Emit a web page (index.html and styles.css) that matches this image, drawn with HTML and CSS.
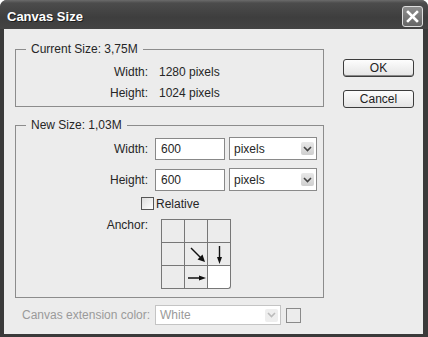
FILE: index.html
```html
<!DOCTYPE html>
<html lang="en">
<head>
    <meta charset="UTF-8">
    <title>Canvas Size</title>
    <link rel="stylesheet" href="styles.css">
</head>
<body>

    <div class="window">
        <!-- Title bar -->
        <div class="titlebar">
            <span class="title">Canvas Size</span>
            <div class="close">
                <svg width="13" height="13" viewBox="0 0 13 13">
                    <path d="M2 2 L11 11 M11 2 L2 11" stroke="#fff" stroke-width="2.6" stroke-linecap="square"/>
                </svg>
            </div>
        </div>

        <div class="client">
            <div class="main">
                <!-- Current size -->
                <fieldset class="group current">
                    <legend>Current Size: 3,75M</legend>
                    <div class="row">
                        <span class="label">Width:</span>
                        <span class="value">1280 pixels</span>
                    </div>
                    <div class="row">
                        <span class="label">Height:</span>
                        <span class="value">1024 pixels</span>
                    </div>
                </fieldset>

                <!-- New size -->
                <fieldset class="group new">
                    <legend>New Size: 1,03M</legend>
                    <div class="field-row">
                        <span class="label">Width:</span>
                        <div class="input">600</div>
                        <div class="select">pixels<span class="arrow"><svg width="9" height="6" viewBox="0 0 9 6"><path d="M1 1 L4.5 4.5 L8 1" fill="none" stroke="#444" stroke-width="1.6"/></svg></span></div>
                    </div>
                    <div class="field-row">
                        <span class="label">Height:</span>
                        <div class="input">600</div>
                        <div class="select">pixels<span class="arrow"><svg width="9" height="6" viewBox="0 0 9 6"><path d="M1 1 L4.5 4.5 L8 1" fill="none" stroke="#444" stroke-width="1.6"/></svg></span></div>
                    </div>
                    <div class="check-row">
                        <span class="checkbox"></span>
                        <span>Relative</span>
                    </div>
                    <div class="anchor-row">
                        <span class="label">Anchor:</span>
                        <div class="anchor">
                            <div class="cell"></div>
                            <div class="cell"></div>
                            <div class="cell"></div>
                            <div class="cell"></div>
                            <div class="cell">
                                <svg width="22" height="22" viewBox="0 0 22 22">
                                    <path d="M6 5 L16 15" stroke="#111" stroke-width="1.4"/>
                                    <polygon points="20,19 17.5,11.5 12.5,16.5" fill="#111"/>
                                </svg>
                            </div>
                            <div class="cell">
                                <svg width="22" height="22" viewBox="0 0 22 22">
                                    <path d="M11.5 3 L11.5 15" stroke="#111" stroke-width="1.4"/>
                                    <polygon points="11.5,21 9,14 14,14" fill="#111"/>
                                </svg>
                            </div>
                            <div class="cell"></div>
                            <div class="cell">
                                <svg width="22" height="22" viewBox="0 0 22 22">
                                    <path d="M3 12 L15 12" stroke="#111" stroke-width="1.4"/>
                                    <polygon points="21,12 14,9.5 14,14.5" fill="#111"/>
                                </svg>
                            </div>
                            <div class="cell current-cell"></div>
                        </div>
                    </div>
                </fieldset>

                <!-- Canvas extension color -->
                <div class="ext-row">
                    <span class="ext-label">Canvas extension color:</span>
                    <div class="select disabled">White<span class="arrow"><svg width="9" height="6" viewBox="0 0 9 6"><path d="M1 1 L4.5 4.5 L8 1" fill="none" stroke="#bbb" stroke-width="1.6"/></svg></span></div>
                    <span class="swatch"></span>
                </div>
            </div>

            <!-- Buttons -->
            <div class="buttons">
                <div class="button default">OK</div>
                <div class="button">Cancel</div>
            </div>
        </div>
    </div>

</body>
</html>
```

FILE: styles.css
```css
/* Window chrome */
body {
    margin: 0;
    background-color: #fff;
    font-family: "Liberation Sans", Arial, sans-serif;
    font-size: 12px;
    color: #262626;
}

.window {
    width: 428px;
    height: 337px;
    background-color: #3a3a3a;
    border-radius: 7px 7px 0 0;
    display: flex;
    flex-direction: column;
    overflow: hidden;
}

.titlebar {
    height: 29px;
    flex: none;
    box-sizing: border-box;
    display: flex;
    align-items: center;
    justify-content: space-between;
    padding: 4px 5px 0 7px;
    background: linear-gradient(#6b6b6b 0, #4c4c4c 3px, #3e3e3e 60%, #444 100%);
}

.title {
    color: #fff;
    font-weight: bold;
    font-size: 13px;
    text-shadow: 1px 1px 0 #1c1c1c;
}

.close {
    width: 19px;
    height: 19px;
    border: 1px solid #dedede;
    border-radius: 3px;
    background: linear-gradient(#8e8e8e, #666);
    display: flex;
    align-items: center;
    justify-content: center;
}

/* Client area */
.client {
    flex: 1;
    margin: 0 5px 3px 4px;
    background-color: #ececec;
    display: flex;
    padding: 13px 9px 0 11px;
}

.main {
    width: 309px;
    flex: none;
}

.group {
    margin: 0;
    padding: 5px 0 3px 0;
    border: 1px solid #8c8c8c;
    min-width: 0;
}

.group legend {
    margin-left: 10px;
    padding: 0 5px;
    line-height: 14px;
}

.group.new {
    margin-top: 11px;
    padding-bottom: 8px;
}

.row {
    display: grid;
    grid-template-columns: 132px auto;
    column-gap: 11px;
    height: 21px;
    align-items: center;
}

.label {
    text-align: right;
}

/* New size fields */
.field-row {
    display: flex;
    align-items: center;
    height: 23px;
}

.field-row + .field-row {
    margin-top: 8px;
}

.field-row .label {
    width: 132px;
    margin-right: 7px;
}

.input {
    width: 70px;
    height: 22px;
    box-sizing: border-box;
    border: 1px solid #888;
    background-color: #fff;
    padding-left: 5px;
    line-height: 20px;
}

.select {
    width: 88px;
    height: 23px;
    box-sizing: border-box;
    margin-left: 4px;
    border: 1px solid #8a8a8a;
    background-color: #fff;
    padding-left: 4px;
    display: flex;
    align-items: center;
    justify-content: space-between;
}

.select .arrow {
    width: 13px;
    height: 13px;
    margin-right: 2px;
    border-radius: 2px;
    background: linear-gradient(#e8e8e8, #cfcfcf);
    display: flex;
    align-items: center;
    justify-content: center;
}

.check-row {
    display: flex;
    align-items: center;
    height: 15px;
    margin-top: 5px;
    padding-left: 125px;
}

.checkbox {
    width: 13px;
    height: 13px;
    box-sizing: border-box;
    border: 1px solid #555;
    background: linear-gradient(135deg, #ddd, #fff);
    margin-right: 2px;
}

/* Anchor grid */
.anchor-row {
    display: flex;
    margin-top: 8px;
}

.anchor-row .label {
    width: 132px;
    margin-right: 13px;
    line-height: 14px;
    margin-top: -1px;
}

.anchor {
    display: grid;
    grid-template-columns: repeat(3, 23px);
    grid-template-rows: repeat(3, 23px);
    border-left: 1px solid #777;
    border-top: 1px solid #777;
}

.cell {
    border-right: 1px solid #777;
    border-bottom: 1px solid #777;
}

.cell svg {
    display: block;
}

.current-cell {
    background-color: #fff;
    border-radius: 0 0 3px 0;
}

/* Bottom row */
.ext-row {
    display: flex;
    align-items: center;
    margin-top: 7px;
    padding-left: 7px;
    color: #9a9a9a;
}

.ext-label {
    width: 133px;
}

.select.disabled {
    width: 126px;
    height: 20px;
    margin-left: 0;
    border-color: #c4c4c4;
    color: #9a9a9a;
}

.select.disabled .arrow {
    background: #eee;
}

.swatch {
    width: 15px;
    height: 15px;
    box-sizing: border-box;
    margin-left: 5px;
    border: 1px solid #8a8a8a;
    background-color: #ececec;
}

/* Buttons */
.buttons {
    margin-left: 19px;
    padding-top: 17px;
    width: 71px;
}

.button {
    height: 18px;
    box-sizing: border-box;
    border: 1px solid #3c3c3c;
    border-radius: 3px;
    background: linear-gradient(#fdfdfd, #e4e4e4);
    text-align: center;
    line-height: 16px;
    color: #222;
}

.button.default {
    box-shadow: inset 0 -1px 0 #888;
}

.button + .button {
    margin-top: 13px;
}
```
